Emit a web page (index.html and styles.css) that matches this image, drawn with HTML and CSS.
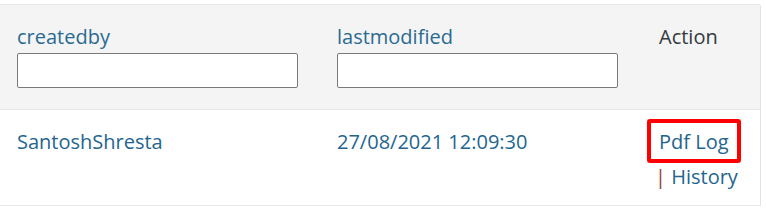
FILE: index.html
```html
<!DOCTYPE html>
<html lang="en">
<head>
<meta charset="utf-8">
<title>Log table</title>
<link rel="stylesheet" href="styles.css">
</head>
<body>
<div class="wrap">
  <div class="table">
    <div class="row head">
      <div class="cell">
        <label class="label" for="f-createdby">createdby</label>
        <input class="filter" id="f-createdby" type="text">
      </div>
      <div class="cell">
        <label class="label" for="f-lastmodified">lastmodified</label>
        <input class="filter" id="f-lastmodified" type="text">
      </div>
      <div class="cell action-head">Action</div>
    </div>
    <div class="row body">
      <div class="cell"><span class="val">SantoshShresta</span></div>
      <div class="cell"><span class="val">27/08/2021 12:09:30</span></div>
      <div class="cell actions">
        <a class="link pdf" href="#">Pdf Log</a>
        <span class="more"><span class="pipe">|</span> <a class="link" href="#">History</a></span>
      </div>
    </div>
  </div>
</div>
</body>
</html>
```
FILE: styles.css
```css
html, body {
  margin: 0;
  padding: 0;
  background: #ffffff;
}
body {
  font-family: "Open Sans", "Noto Sans", sans-serif;
  font-size: 20px;
  line-height: 27px;
  color: #2c3338;
}
.wrap {
  padding-top: 4px;
}
.table {
  border-top: 1px solid #e6e6e6;
  width: 760px;
}
.row {
  display: grid;
  grid-template-columns: 320px 322px 1fr;
  align-items: start;
  border-right: 1px solid #e3e3e3;
  width: 760px;
}
.head {
  background: #f4f4f4;
  height: 104px;
  border-bottom: 1px solid #e6e6e6;
}
.body {
  background: #ffffff;
  height: 95px;
  border-bottom: 1px solid #e6e6e6;
}
.cell {
  padding: 0 17px;
  min-width: 0;
}
.head .cell {
  padding-top: 18px;
}
.label {
  display: block;
  color: #2a6a92;
  height: 27px;
}
.filter {
  display: block;
  box-sizing: border-box;
  margin: 3px 0 0;
  width: 281px;
  height: 35px;
  border: 1px solid #7a7a7a;
  border-radius: 2px;
  background: #ffffff;
  padding: 0 8px;
  font: inherit;
}
.action-head {
  color: #333a40;
}
.body .cell {
  padding-top: 18px;
}
.val {
  color: #23658f;
}
.body .actions {
  padding-top: 9px;
  padding-right: 4px;
}
.link {
  color: #23658f;
  text-decoration: none;
}
.pdf {
  display: inline-block;
  margin-left: -12px;
  padding: 5px 8px 4px 8px;
  border: 4px solid #ff0000;
  border-radius: 3px;
}
.more {
  display: block;
  margin-left: -4px;
  white-space: nowrap;
}
.pipe {
  color: #9a3a2e;
}
```
